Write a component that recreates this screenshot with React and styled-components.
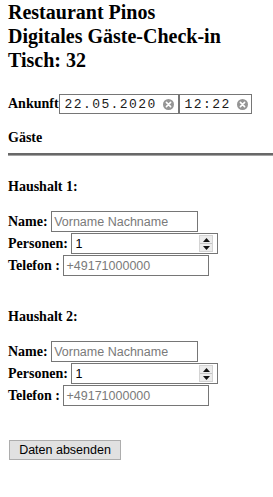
import React from "react";
import styled, { createGlobalStyle } from "styled-components";

const GlobalStyle = createGlobalStyle`
  html, body { background: #ffffff; }
  body {
    margin: 0 0 0 8px;
    color: #000000;
    font-family: "Liberation Serif", "Times New Roman", serif;
  }
`;

const Page = styled.main`
  display: flex;
  flex-direction: column;
  align-items: flex-start;
`;

const Title = styled.h1`
  margin: 0;
  font: 700 20px/24px "Liberation Serif", "Times New Roman", serif;
`;

const ArrivalRow = styled.div`
  display: flex;
  align-items: baseline;
  margin-top: 22px;
`;

const Label = styled.label`
  font: 700 14px/16px "Liberation Serif", "Times New Roman", serif;
  white-space: pre;
`;

const DateBox = styled.div`
  box-sizing: border-box;
  display: flex;
  align-items: center;
  justify-content: space-between;
  width: ${(p) => p.$width}px;
  height: 20px;
  padding: 0 ${(p) => p.$padRight}px 0 5px;
  border: 1px solid #767676;
  background: #fff;
  font: 400 13px/17px "Liberation Mono", "Courier New", monospace;
  letter-spacing: 1.4px;
  color: #1a1a1a;
`;

const ClearIcon = () => (
  <svg width="11" height="11" viewBox="0 0 11 11" aria-hidden="true">
    <circle cx="5.5" cy="5.5" r="5.5" fill="#959595" />
    <path d="M3.4 3.4 L7.6 7.6 M7.6 3.4 L3.4 7.6" stroke="#fff" strokeWidth="1.6" strokeLinecap="round" />
  </svg>
);

const SectionTitle = styled.h2`
  margin: 16px 0 0;
  font: 700 14px/16px "Liberation Serif", "Times New Roman", serif;
`;

const Rule = styled.hr`
  box-sizing: border-box;
  align-self: stretch;
  margin: 7px 0 0;
  height: 3px;
  border: 0;
  border-top: 2px solid #686868;
  border-bottom: 1px solid #a4a4a4;
`;

const Household = styled.section`
  display: flex;
  flex-direction: column;
  align-items: flex-start;
  margin-top: ${(p) => p.$top}px;
`;

const HouseholdTitle = styled.h3`
  margin: 0 0 16px;
  font: 700 14px/16px "Liberation Serif", "Times New Roman", serif;
`;

const FieldRow = styled.div`
  display: flex;
  align-items: baseline;
  column-gap: 3.5px;
  height: 22px;
`;

const TextInput = styled.input`
  box-sizing: border-box;
  width: ${(p) => p.$width}px;
  height: 21px;
  margin: 0;
  padding: 0 2px;
  border: 1px solid #767676;
  border-radius: 0;
  background: #fff;
  font: 400 12.5px "Liberation Sans", Arial, sans-serif;
  color: #000;
  outline: none;
  &::placeholder { color: #7a7a7a; opacity: 1; }
`;

const NumberBox = styled.div`
  box-sizing: border-box;
  display: flex;
  align-items: center;
  width: 147px;
  height: 21px;
  border: 1px solid #767676;
  background: #fff;
  padding-right: 4px;
`;

const NumberInput = styled.input`
  flex: 1;
  min-width: 0;
  height: 19px;
  margin: 0;
  padding: 0 3px;
  border: 0;
  background: transparent;
  font: 400 12.5px "Liberation Sans", Arial, sans-serif;
  color: #000;
  outline: none;
`;

const Spinner = styled.div`
  display: flex;
  flex-direction: column;
  width: 14px;
  height: 17px;
  box-sizing: border-box;
  border: 1px solid #d4d4d4;
  background: #ececec;
`;

const SpinHalf = styled.div`
  flex: 1;
  display: flex;
  align-items: center;
  justify-content: center;
  border-top: ${(p) => (p.$lower ? "1px solid #c4c4c4" : "0")};
`;

const Arrow = ({ down }) => (
  <svg width="7" height="4" viewBox="0 0 7 4" aria-hidden="true">
    <path d={down ? "M0 0 H7 L3.5 4 Z" : "M0 4 H7 L3.5 0 Z"} fill="#111" />
  </svg>
);

const SubmitButton = styled.button`
  box-sizing: border-box;
  margin: 33px 0 0 1px;
  width: 112px;
  height: 20px;
  padding: 0;
  border: 1px solid #adadad;
  border-radius: 0;
  background: #e1e1e1;
  font: 400 12.5px "Liberation Sans", Arial, sans-serif;
  color: #000;
`;

const households = [
  { id: 1, top: 23 },
  { id: 2, top: 32 },
];

export default function App() {
  return (
    <>
      <GlobalStyle />
      <Page>
        <Title>
          Restaurant Pinos
          <br />
          Digitales Gäste-Check-in
          <br />
          Tisch: 32
        </Title>

        <ArrivalRow>
          <Label>Ankunft</Label>
          <DateBox $width={120} $padRight={4}>
            <span>22.05.2020</span>
            <ClearIcon />
          </DateBox>
          <DateBox $width={73} $padRight={3}>
            <span>12:22</span>
            <ClearIcon />
          </DateBox>
        </ArrivalRow>

        <SectionTitle>Gäste</SectionTitle>
        <Rule />

        {households.map((h) => (
          <Household key={h.id} $top={h.top}>
            <HouseholdTitle>Haushalt {h.id}:</HouseholdTitle>
            <FieldRow>
              <Label>Name:</Label>
              <TextInput $width={147} placeholder="Vorname Nachname" />
            </FieldRow>
            <FieldRow>
              <Label>Personen:</Label>
              <NumberBox>
                <NumberInput defaultValue="1" />
                <Spinner>
                  <SpinHalf>
                    <Arrow />
                  </SpinHalf>
                  <SpinHalf $lower>
                    <Arrow down />
                  </SpinHalf>
                </Spinner>
              </NumberBox>
            </FieldRow>
            <FieldRow>
              <Label>Telefon :</Label>
              <TextInput $width={146} placeholder="+49171000000" />
            </FieldRow>
          </Household>
        ))}

        <SubmitButton type="button">Daten absenden</SubmitButton>
      </Page>
    </>
  );
}
